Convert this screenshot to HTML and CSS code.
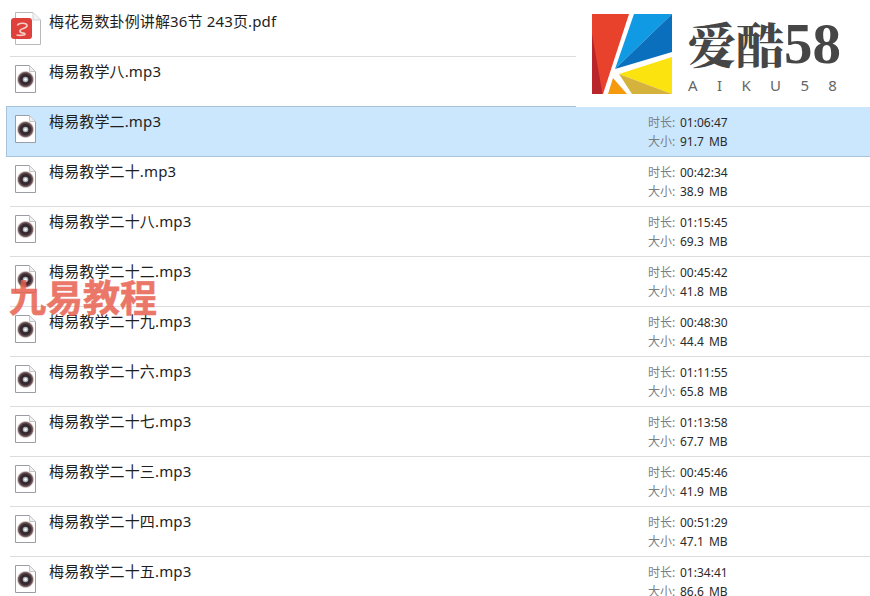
FILE: index.html
```
<!DOCTYPE html>
<html lang="zh-CN">
<head>
<meta charset="utf-8">
<title>梅易教学</title>
<link rel="stylesheet" href="styles.css">
</head>
<body>
<svg class="defs" width="0" height="0">
  <defs>
    <radialGradient id="halo">
      <stop offset="0" stop-color="#241c26"/>
      <stop offset="0.6" stop-color="#3a2c32"/>
      <stop offset="0.8" stop-color="#7d6365"/>
      <stop offset="1" stop-color="#e0d2cc" stop-opacity="0"/>
    </radialGradient>
    <symbol id="mp3" viewBox="0 0 24 30">
      <path d="M1.5 1.5H15.5L21.5 7.5V28.5H1.5Z" fill="#fff" stroke="#9a9ea4"/>
      <path d="M15.5 1.5V7.5H21.5" fill="#eef0f2" stroke="#c4c7ca"/>
      <circle cx="11.5" cy="15.5" r="9" fill="url(#halo)"/>
      <circle cx="11.5" cy="15.5" r="2.8" fill="#a9b4b8"/>
      <circle cx="11.5" cy="15.5" r="1.3" fill="#fff"/>
    </symbol>
    <symbol id="pdf" viewBox="0 0 30 34">
      <path d="M4.5 .5H22L29.5 8V32.5H4.5Z" fill="#fff" stroke="#b6babd"/>
      <path d="M22 .5V8H29.5" fill="#f2f3f4" stroke="#cfd2d4"/>
      <rect x="0" y="6" width="21" height="21" rx="3" fill="#df403b"/>
      <path d="M6.5 13.5C7 11 16 10 16 13.5C16 17 9 16 9 19C9 22 14 20.5 14 22C14 23.5 9 23.5 5.5 23" fill="none" stroke="#f6cdc4" stroke-width="1.7"/>
    </symbol>
  </defs>
</svg>

<main class="list">
  <div class="row">
    <span class="icon-slot icon-slot-pdf"><svg class="icon-pdf"><use href="#pdf"/></svg></span>
    <span class="name">梅花易数卦例讲解36节 243页.pdf</span>
  </div>
  <div class="row">
    <span class="icon-slot"><svg class="icon-mp3"><use href="#mp3"/></svg></span>
    <span class="name">梅易教学八.mp3</span>
  </div>
  <div class="row row-selected">
    <span class="icon-slot"><svg class="icon-mp3"><use href="#mp3"/></svg></span>
    <span class="name">梅易教学二.mp3</span>
    <div class="meta"><p><span class="label">时长:</span>01:06:47</p><p><span class="label">大小:</span>91.7 MB</p></div>
  </div>
  <div class="row">
    <span class="icon-slot"><svg class="icon-mp3"><use href="#mp3"/></svg></span>
    <span class="name">梅易教学二十.mp3</span>
    <div class="meta"><p><span class="label">时长:</span>00:42:34</p><p><span class="label">大小:</span>38.9 MB</p></div>
  </div>
  <div class="row">
    <span class="icon-slot"><svg class="icon-mp3"><use href="#mp3"/></svg></span>
    <span class="name">梅易教学二十八.mp3</span>
    <div class="meta"><p><span class="label">时长:</span>01:15:45</p><p><span class="label">大小:</span>69.3 MB</p></div>
  </div>
  <div class="row">
    <span class="icon-slot"><svg class="icon-mp3"><use href="#mp3"/></svg></span>
    <span class="name">梅易教学二十二.mp3</span>
    <div class="meta"><p><span class="label">时长:</span>00:45:42</p><p><span class="label">大小:</span>41.8 MB</p></div>
  </div>
  <div class="row">
    <span class="icon-slot"><svg class="icon-mp3"><use href="#mp3"/></svg></span>
    <span class="name">梅易教学二十九.mp3</span>
    <div class="meta"><p><span class="label">时长:</span>00:48:30</p><p><span class="label">大小:</span>44.4 MB</p></div>
  </div>
  <div class="row">
    <span class="icon-slot"><svg class="icon-mp3"><use href="#mp3"/></svg></span>
    <span class="name">梅易教学二十六.mp3</span>
    <div class="meta"><p><span class="label">时长:</span>01:11:55</p><p><span class="label">大小:</span>65.8 MB</p></div>
  </div>
  <div class="row">
    <span class="icon-slot"><svg class="icon-mp3"><use href="#mp3"/></svg></span>
    <span class="name">梅易教学二十七.mp3</span>
    <div class="meta"><p><span class="label">时长:</span>01:13:58</p><p><span class="label">大小:</span>67.7 MB</p></div>
  </div>
  <div class="row">
    <span class="icon-slot"><svg class="icon-mp3"><use href="#mp3"/></svg></span>
    <span class="name">梅易教学二十三.mp3</span>
    <div class="meta"><p><span class="label">时长:</span>00:45:46</p><p><span class="label">大小:</span>41.9 MB</p></div>
  </div>
  <div class="row">
    <span class="icon-slot"><svg class="icon-mp3"><use href="#mp3"/></svg></span>
    <span class="name">梅易教学二十四.mp3</span>
    <div class="meta"><p><span class="label">时长:</span>00:51:29</p><p><span class="label">大小:</span>47.1 MB</p></div>
  </div>
  <div class="row">
    <span class="icon-slot"><svg class="icon-mp3"><use href="#mp3"/></svg></span>
    <span class="name">梅易教学二十五.mp3</span>
    <div class="meta"><p><span class="label">时长:</span>01:34:41</p><p><span class="label">大小:</span>86.6 MB</p></div>
  </div>
</main>

<div class="watermark">九易教程</div>

<aside class="brand">
  <svg class="brand-mark" viewBox="0 0 80 80">
    <polygon points="0,0 37,0 11,80 0,80" fill="#e8412c"/>
    <polygon points="0,20 10.5,80 0,80" fill="#b8252a"/>
    <polygon points="42,0 80,0 23,55" fill="#109ae4"/>
    <polygon points="80,0 80,38 23,55" fill="#0a6fbd"/>
    <polygon points="80,43 80,80 27,60" fill="#fbe30f"/>
    <polygon points="27,60 80,80 40,80" fill="#d4b23c"/>
    <polygon points="16,80 21,64 35,80" fill="#f59a0c"/>
  </svg>
  <div class="brand-text">
    <div class="brand-title">爱酷<span class="brand-num">58</span></div>
    <div class="brand-sub"><span>A</span><span>I</span><span>K</span><span>U</span><span>5</span><span>8</span></div>
  </div>
</aside>
</body>
</html>
```
FILE: styles.css
```
html, body {
  margin: 0;
  height: 100%;
  overflow: hidden;
  background: #fff;
}
body {
  position: relative;
  font-family: "Noto Sans", "Noto Sans CJK SC", sans-serif;
  color: #1e1e1e;
}
.defs {
  position: absolute;
}
.list {
  display: flex;
  flex-direction: column;
  padding: 7px 0 0 10px;
}
.row {
  display: flex;
  flex: none;
  box-sizing: border-box;
  height: 50px;
  border-bottom: 1px solid #dcdcdc;
}
.row-selected {
  height: 51px;
  margin: -1px 0 0 -4px;
  padding-left: 3px;
  background: #cbe7fd;
  border: 1px solid #a9c4d8;
  border-right: 0;
}
.icon-slot {
  flex: none;
  display: flex;
  align-items: flex-start;
  width: 39px;
  box-sizing: border-box;
  padding: 7px 0 0 4px;
}
.icon-slot-pdf {
  padding: 5px 0 0 1px;
}
.icon-mp3 {
  width: 24px;
  height: 30px;
}
.icon-pdf {
  width: 30px;
  height: 34px;
}
.name {
  flex: none;
  width: 599px;
  font-size: 15px;
  line-height: 18px;
  letter-spacing: .14px;
  margin-top: 5px;
}
.meta {
  flex: none;
  margin-top: 6px;
  font-size: 12px;
  line-height: 19px;
  color: #2a2a2a;
  word-spacing: 2px;
}
.meta p {
  margin: 0;
  white-space: nowrap;
}
.label {
  display: inline-block;
  width: 32px;
  color: #7a7f85;
}
.watermark {
  position: absolute;
  left: 9px;
  top: 272px;
  font-family: "Noto Sans CJK SC", sans-serif;
  font-size: 37px;
  line-height: 48px;
  font-weight: 700;
  color: #e8604f;
  -webkit-text-stroke: .6px #e8604f;
  opacity: .85;
  white-space: nowrap;
}
.brand {
  position: absolute;
  top: 0;
  right: 0;
  width: 294px;
  height: 107px;
  box-sizing: border-box;
  background: #fff;
  display: flex;
  padding: 14px 0 0 16px;
  gap: 16px;
}
.brand-mark {
  flex: none;
  width: 80px;
  height: 80px;
}
.brand-title {
  font-family: "Noto Serif CJK SC", "Noto Sans CJK SC", serif;
  font-size: 48px;
  line-height: 58px;
  font-weight: 900;
  color: #464646;
  white-space: nowrap;
}
.brand-num {
  font-family: "Liberation Serif", serif;
  font-size: 57px;
  font-weight: 700;
}
.brand-sub {
  display: flex;
  width: 149px;
  justify-content: space-between;
  margin-top: 2px;
  font-size: 15px;
  line-height: 20px;
  color: #666;
}
```
